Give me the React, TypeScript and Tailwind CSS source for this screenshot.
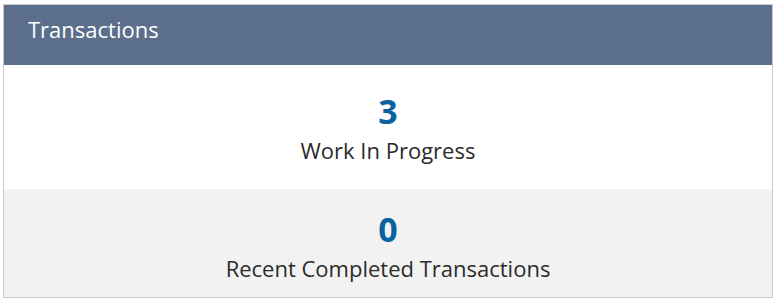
export default function App() {
  return (
    <div className="w-[778px] h-[302px] bg-white pt-[4px] pl-[3px]" style={{ fontFamily: '"Open Sans", "Noto Sans", sans-serif' }}>
      <div className="w-[770px] border border-[#cccccc] flex flex-col">
        <div className="h-[60px] bg-[#5b6e8b] flex items-start pt-[9px] px-[24px]">
          <span className="text-white text-[22px] leading-[30px]">Transactions</span>
        </div>
        <div className="h-[124px] bg-white flex flex-col items-center pt-[26px]">
          <span className="text-[#0a62a0] text-[34px] font-bold leading-[40px]">3</span>
          <span className="text-[#2b2b2b] text-[22px] leading-[30px] mt-[4px]">Work In Progress</span>
        </div>
        <div className="h-[108px] bg-[#f2f2f2] flex flex-col items-center pt-[20px]">
          <span className="text-[#0a62a0] text-[34px] font-bold leading-[40px]">0</span>
          <span className="text-[#2b2b2b] text-[22px] leading-[30px] mt-[4px]">Recent Completed Transactions</span>
        </div>
      </div>
    </div>
  );
}
